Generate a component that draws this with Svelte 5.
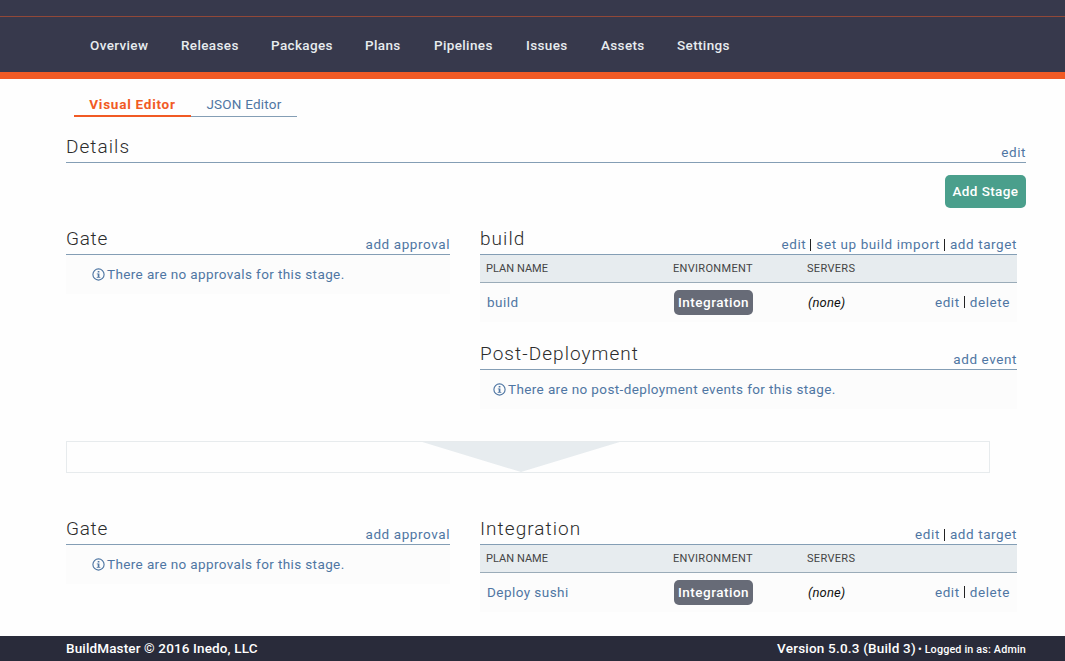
<script>
  const nav = [
    { label: 'Overview', width: 58 }, { label: 'Releases', width: 57 },
    { label: 'Packages', width: 61 }, { label: 'Plans', width: 36 },
    { label: 'Pipelines', width: 59 }, { label: 'Issues', width: 42 },
    { label: 'Assets', width: 43 }, { label: 'Settings', width: 54 }
  ];
  const stages = [
    { name: 'build', actions: ['edit', 'set up build import', 'add target'], plan: 'build', post: true },
    { name: 'Integration', actions: ['edit', 'add target'], plan: 'Deploy sushi', post: false }
  ];
</script>

{#snippet info()}
  <svg class="info" viewBox="0 0 13 13" aria-hidden="true">
    <circle cx="6.5" cy="6.5" r="5.6" fill="none" stroke="currentColor" stroke-width="1.15" />
    <path d="M5.7 2.9h1.7v1.5H5.7zM4.8 5.4h2.6v3.5h.9v.9H4.7v-.9h1V6.3h-.9z" fill="currentColor" />
  </svg>
{/snippet}

{#snippet links(items)}
  <span class="links">{#each items as item, i}{#if i}<i class="bar"></i>{/if}<a href="#top">{item}</a>{/each}</span>
{/snippet}

<div class="page">
  <header>
    <div class="strip"></div>
    <nav>
      {#each nav as item}<a href="#top" style:width="{item.width}px">{item.label}</a>{/each}
    </nav>
  </header>

  <main>
    <div class="tabs">
      <a class="tab active" href="#top">Visual Editor</a>
      <a class="tab" href="#top">JSON Editor</a>
    </div>
    <div class="heading details"><h2>Details</h2>{@render links(['edit'])}</div>
    <div class="toolbar"><button>Add Stage</button></div>

    {#each stages as stage, i}
      {#if i}<div class="divider"><svg viewBox="0 0 204 31"><path d="M0 0H204L102 31Z" fill="#e7ecef" /></svg></div>{/if}
      <div class="stage" class:second={i > 0}>
        <section class="gate">
          <div class="heading"><h2 class="gt">Gate</h2>{@render links(['add approval'])}</div>
          <p class="empty gate-empty">{@render info()}<span>There are no approvals for this stage.</span></p>
        </section>
        <section class="targets">
          <div class="heading"><h2>{stage.name}</h2>{@render links(stage.actions)}</div>
          <div class="row head"><span class="pn">PLAN NAME</span><span class="env">ENVIRONMENT</span><span>SERVERS</span></div>
          <div class="row body">
            <a href="#top">{stage.plan}</a>
            <span><b class="badge">Integration</b></span>
            <em>(none)</em>
            {@render links(['edit', 'delete'])}
          </div>
          {#if stage.post}
            <div class="heading post"><h2>Post-Deployment</h2>{@render links(['add event'])}</div>
            <p class="empty">{@render info()}<span>There are no post-deployment events for this stage.</span></p>
          {/if}
        </section>
      </div>
    {/each}
  </main>

  <footer>
    <span class="copy">BuildMaster © 2016 Inedo, LLC</span>
    <span class="version"><span>Version 5.0.3 (Build 3)</span><small>• Logged in as: Admin</small></span>
  </footer>
</div>

<style>
  :global(body) { margin: 0; background: #fefefe; }
  * { box-sizing: border-box; }
  .page { height: 661px; overflow: hidden; display: flex; flex-direction: column; font: 13.5px/18px Roboto, sans-serif; letter-spacing: .38px; color: #222; }
  a { color: #4f76a3; text-decoration: none; white-space: nowrap; }
  header { height: 79px; background: #37394c; border-bottom: 7px solid #f15a24; }
  .strip { height: 17px; border-bottom: 1px solid #914838; }
  nav { display: flex; gap: 33px; padding: 19px 0 0 90px; }
  nav a { color: #e7ecef; font-weight: 500; letter-spacing: .36px; }
  main { flex: 1; padding: 14px 39px 0 66px; }
  .tabs { display: flex; padding-left: 8px; height: 24px; }
  .tab { width: 106px; border-bottom: 1px solid #849eb5; text-align: center; line-height: 22px; letter-spacing: .22px; }
  .tab.active { width: 117px; color: #f15a24; font-weight: 700; border-bottom: 2px solid #f15a24; letter-spacing: .75px; }
  .heading { height: 28px; border-bottom: 1px solid #849eb5; display: flex; justify-content: space-between; align-items: flex-start; }
  h2 { margin: 0; font-size: 19px; line-height: 24px; font-weight: 300; letter-spacing: 1.05px; color: #2c2c2c; }
  .gt { letter-spacing: .7px; }
  .heading .links { padding-top: 8px; line-height: 18px; }
  .links { display: flex; align-items: center; letter-spacing: .58px; }
  .bar { width: 1px; height: 12px; background: #222; margin: 1px 5px 0 4px; }
  .details { margin-top: 18px; }
  .toolbar { display: flex; justify-content: flex-end; padding-top: 12px; }
  button { width: 81px; height: 33px; padding: 0 0 2px; border: 0; border-radius: 5px; background: #4a9f8c; color: #fff; font: 500 13.5px Roboto, sans-serif; letter-spacing: .4px; }
  .stage { display: flex; gap: 30px; margin-top: 19px; height: 182px; }
  .stage.second { margin-top: 44px; height: 95px; }
  .gate { width: 384px; }
  .targets { width: 537px; }
  .empty { margin: 0; height: 39px; background: #fcfcfc; display: flex; align-items: center; gap: 2.5px; padding-left: 12.5px; color: #4f76a3; }
  .empty span { padding-bottom: 2px; }
  .gate-empty { padding-left: 25.5px; }
  .info { width: 13px; height: 13px; }
  .row { display: grid; grid-template-columns: 187px 134px 1fr auto; align-items: center; }
  .head { height: 28px; padding: 0 6px; background: #e7ecef; border-bottom: 1px solid #9aabb8; font-size: 11px; letter-spacing: .32px; color: #444; }
  .pn { letter-spacing: .04px; }
  .body { height: 39px; padding: 0 7px; background: #fcfcfc; color: #111; }
  .body > a { letter-spacing: .45px; padding-bottom: 2px; }
  .body .links { padding-bottom: 2px; }
  em { font-size: 13px; letter-spacing: .15px; }
  .badge { display: inline-flex; justify-content: center; align-items: center; width: 79px; height: 25px; padding-bottom: 2px; border-radius: 5px; background: #676b77; color: #fff; font-weight: 500; letter-spacing: .5px; }
  .post { margin-top: 20px; }
  .divider { width: 924px; height: 32px; margin-top: 32px; border: 1px solid #e7ebed; display: flex; padding-left: 352px; }
  .divider svg { width: 204px; height: 30px; }
  footer { height: 25px; background: #292b3a; color: #fff; display: flex; justify-content: space-between; padding: 0 39px 0 66px; font-weight: 500; line-height: 25px; letter-spacing: .14px; }
  .version { white-space: nowrap; letter-spacing: .2px; }
  small { font-size: 10.8px; letter-spacing: .15px; margin-left: 2px; }
</style>
